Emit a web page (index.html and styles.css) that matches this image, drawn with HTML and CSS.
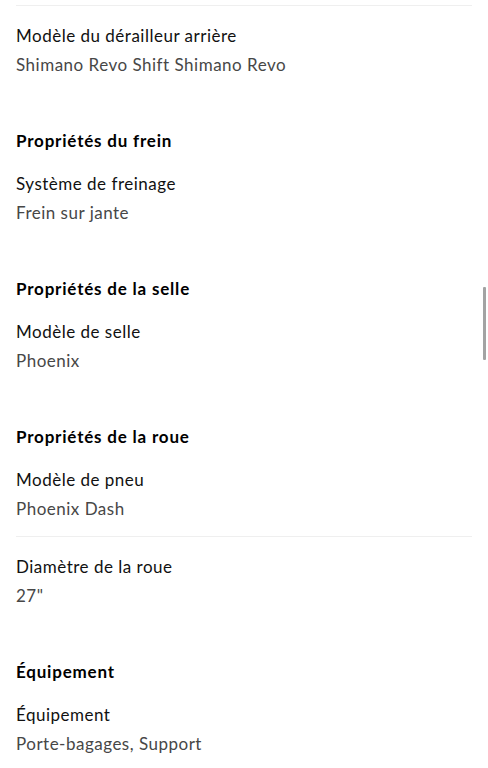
FILE: index.html
```html
<!DOCTYPE html>
<html lang="fr">
<head>
<meta charset="utf-8">
<title>Caractéristiques</title>
<link rel="stylesheet" href="styles.css">
</head>
<body>
<main class="specs">
  <div class="item">
    <div class="label">Modèle du dérailleur arrière</div>
    <div class="value">Shimano Revo Shift Shimano Revo</div>
  </div>
  <section class="group">
    <h2 class="group-title">Propriétés du frein</h2>
    <div class="item">
      <div class="label">Système de freinage</div>
      <div class="value">Frein sur jante</div>
    </div>
  </section>
  <section class="group">
    <h2 class="group-title">Propriétés de la selle</h2>
    <div class="item">
      <div class="label">Modèle de selle</div>
      <div class="value">Phoenix</div>
    </div>
  </section>
  <section class="group">
    <h2 class="group-title">Propriétés de la roue</h2>
    <div class="item">
      <div class="label">Modèle de pneu</div>
      <div class="value">Phoenix Dash</div>
    </div>
    <div class="item divided">
      <div class="label">Diamètre de la roue</div>
      <div class="value">27"</div>
    </div>
  </section>
  <section class="group">
    <h2 class="group-title">Équipement</h2>
    <div class="item">
      <div class="label">Équipement</div>
      <div class="value">Porte-bagages, Support</div>
    </div>
  </section>
</main>
<div class="scrollbar"></div>
</body>
</html>
```
FILE: styles.css
```css
html, body {
  margin: 0;
  padding: 0;
  background: #ffffff;
}
body {
  font-family: Lato, "Noto Sans", "Liberation Sans", sans-serif;
  color: #111111;
  overflow: hidden;
}
.specs {
  padding: 5px 16px 0;
}
.item {
  padding: 15px 0 13px;
}
.specs > .item:first-child,
.item.divided {
  border-top: 1px solid #efefef;
}
.label {
  font-size: 17px;
  line-height: 29px;
  letter-spacing: 0.5px;
  color: #111111;
}
.value {
  font-size: 17px;
  line-height: 29px;
  letter-spacing: 0.5px;
  color: #474747;
}
.group {
  padding-top: 37px;
}
.group-title {
  margin: 0 0 1px;
  font-size: 17px;
  line-height: 24px;
  font-weight: 700;
  letter-spacing: 0.8px;
  color: #000000;
}
.scrollbar {
  position: absolute;
  left: 483px;
  top: 287px;
  width: 3px;
  height: 73px;
  background: #a3a3a3;
  border-radius: 1px;
}
```
